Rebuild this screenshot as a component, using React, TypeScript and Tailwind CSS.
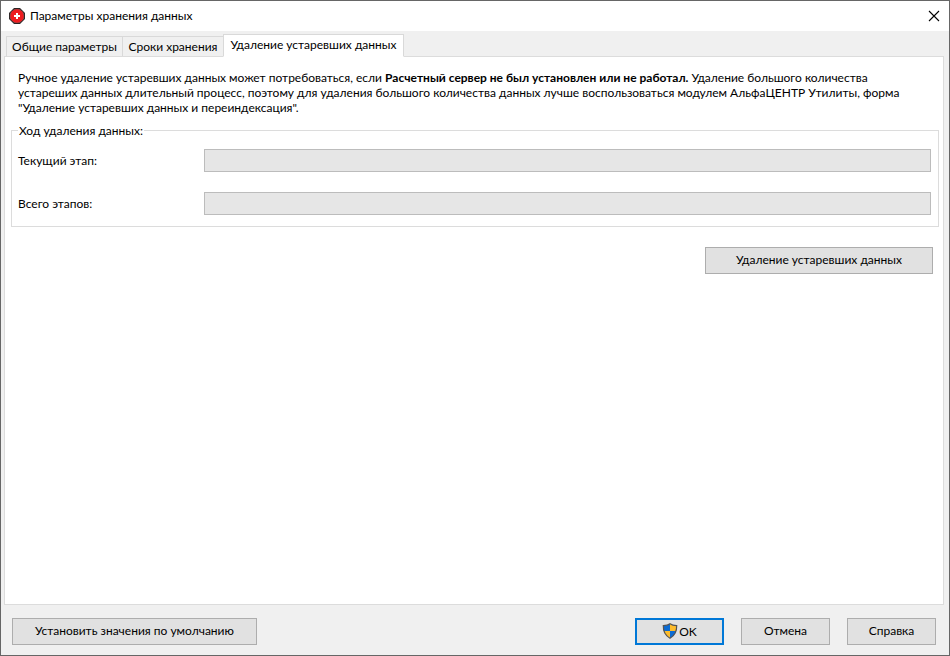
import { useState } from "react";
import clsx from "clsx";

const TABS = [
  { id: "common", label: "Общие параметры", width: "w-[116px]" },
  { id: "terms", label: "Сроки хранения", width: "w-[101px]" },
  { id: "cleanup", label: "Удаление устаревших данных", width: "w-[181px]" },
];

const BUTTON = "flex h-[27px] items-center justify-center bg-[#e1e1e1] pb-[3px]";

function AppIcon() {
  return (
    <svg aria-hidden viewBox="0 0 16 16" className="size-4 shrink-0">
      <path d="M5 0h6l5 5v6l-5 5H5l-5-5V5z" fill="#2a2424" />
      <path d="M5.300 .9h5.400l4.400 4.400v5.400l-4.400 4.400H5.300L.9 10.700V5.300z" fill="#6a5050" />
      <circle cx="8" cy="8" r="6.800" fill="#ee1c1f" />
      <path d="M7 5h2v2h2v2H9v2H7V9H5V7h2z" fill="#fff" />
    </svg>
  );
}

function ShieldIcon() {
  return (
    <svg aria-hidden viewBox="0 0 16 16" className="size-4 shrink-0">
      <defs>
        <clipPath id="shield">
          <path d="M8 .8C6.300 2.100 4 2.600 1.300 2.600c-.2 5.900 1.400 9.800 6.700 12.700 5.300-2.900 6.900-6.800 6.700-12.700C12 2.600 9.700 2.100 8 .8z" />
        </clipPath>
      </defs>
      <g clipPath="url(#shield)">
        <path d="M0 0h8v8H0zM8 8h8v8H8z" fill="#0b6bd3" />
        <path d="M8 0h8v8H8zM0 8h8v8H0z" fill="#fdbc2c" />
      </g>
      <path
        d="M8 .8C6.300 2.100 4 2.600 1.300 2.600c-.2 5.900 1.400 9.800 6.700 12.700 5.300-2.900 6.900-6.800 6.700-12.700C12 2.600 9.700 2.100 8 .8z"
        fill="none"
        stroke="#555"
        strokeWidth="1.200"
      />
    </svg>
  );
}

function StageRow({ id, label }: { id: string; label: string }) {
  return (
    <div className="flex items-center">
      <label htmlFor={id} className="w-[186px] shrink-0">
        {label}
      </label>
      <progress
        id={id}
        value={0}
        max={100}
        className="h-[23px] min-w-0 flex-1 appearance-none border border-[#bcbcbc] bg-[#e6e6e6] [&::-webkit-progress-bar]:bg-[#e6e6e6] [&::-webkit-progress-value]:bg-[#06b025]"
      />
    </div>
  );
}

export default function App() {
  const [active, setActive] = useState("cleanup");

  return (
    <div className="flex min-h-screen flex-col border border-[#666] bg-[#f0f0f0] font-['Lato','Open_Sans',sans-serif] text-[12px] leading-[15px] text-black">
      <header className="flex h-[30px] items-center justify-between bg-white pr-[9px] pl-2">
        <div className="flex items-center gap-[5px]">
          <AppIcon />
          <h1 className="pb-[2px]">Параметры хранения данных</h1>
        </div>
        <button type="button" aria-label="Закрыть">
          <svg viewBox="0 0 12 12" className="size-3" fill="none" stroke="#000" strokeWidth="1.100">
            <path d="M1 1l10 10M11 1L1 11" />
          </svg>
        </button>
      </header>

      <main className="flex flex-1 flex-col pt-[3px] pr-[5px] pl-[3px]">
        <div role="tablist" className="-mb-px flex items-end pl-[2px]">
          {TABS.map((tab) => (
            <button
              key={tab.id}
              type="button"
              role="tab"
              aria-selected={tab.id === active}
              onClick={() => setActive(tab.id)}
              className={clsx(
                "border border-[#d9d9d9] whitespace-nowrap",
                tab.width,
                tab.id === active
                  ? "z-10 h-[23px] border-b-white bg-white pb-[3px]"
                  : "h-[21px] border-r-0 bg-[#f0f0f0]",
              )}
            >
              {tab.label}
            </button>
          ))}
        </div>

        <section role="tabpanel" className="flex-1 border border-[#dcdcdc] bg-white px-[6px] pt-[13px]">
          <p className="pl-[7px] whitespace-nowrap">
            Ручное удаление устаревших данных может потребоваться, если{" "}
            <b>Расчетный сервер не был установлен или не работал.</b> Удаление большого количества
            <br />
            устареших данных длительный процесс, поэтому для удаления большого количества данных
            лучше воспользоваться модулем АльфаЦЕНТР Утилиты, форма
            <br />
            "Удаление устаревших данных и переиндексация".
          </p>

          <fieldset className="mt-2 -mr-[2px] border border-[#dcdcdc] pr-[7px] pb-[11px] pl-[6px]">
            <legend className="px-px">Ход удаления данных:</legend>
            <div className="flex flex-col gap-5 pt-[11px]">
              <StageRow id="current-stage" label="Текущий этап:" />
              <StageRow id="total-stages" label="Всего этапов:" />
            </div>
          </fieldset>

          <div className="mt-5 flex justify-end pr-1">
            <button type="button" className={clsx(BUTTON, "w-[228px] border border-[#adadad]")}>
              Удаление устаревших данных
            </button>
          </div>
        </section>
      </main>

      <footer className="flex items-center justify-between pt-[13px] pr-[13px] pb-[10px] pl-[11px]">
        <button type="button" className={clsx(BUTTON, "w-[245px] border border-[#adadad]")}>
          Установить значения по умолчанию
        </button>
        <div className="flex gap-[17px]">
          <button
            type="button"
            className="flex h-[27px] w-[89px] items-center justify-center gap-px border-2 border-[#0078d7] bg-[#e1e1e1] pb-px"
          >
            <ShieldIcon />
            OK
          </button>
          <button type="button" className={clsx(BUTTON, "w-[89px] border border-[#adadad]")}>
            Отмена
          </button>
          <button type="button" className={clsx(BUTTON, "w-[89px] border border-[#adadad]")}>
            Справка
          </button>
        </div>
      </footer>
    </div>
  );
}
